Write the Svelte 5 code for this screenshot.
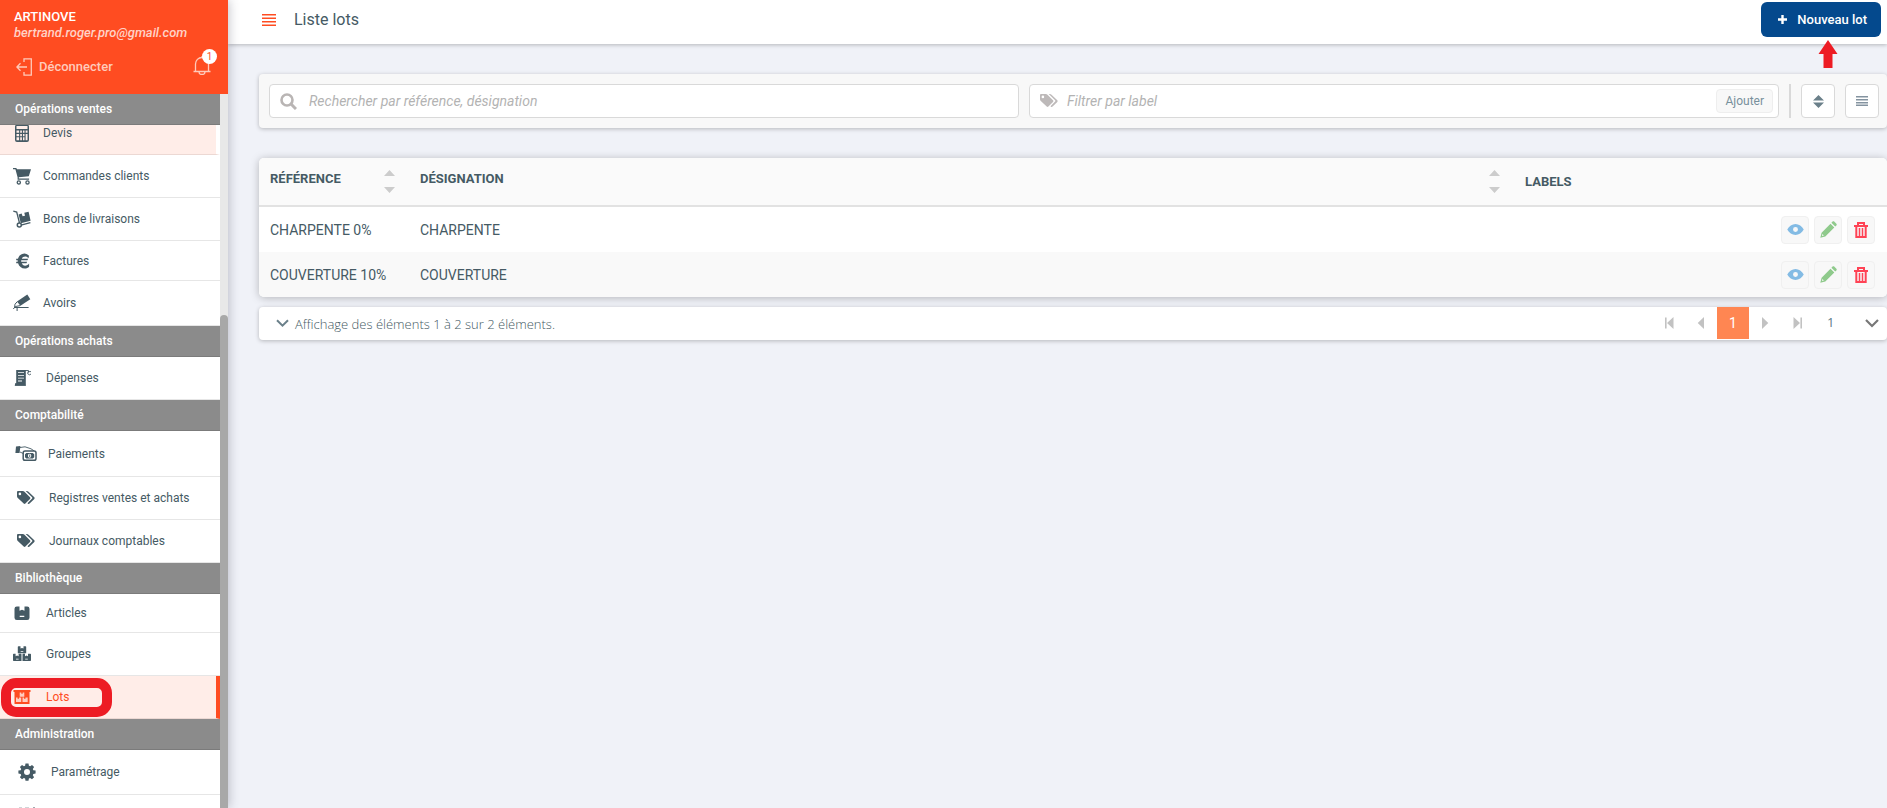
<script>
  const sections = [
    {
      title: 'Opérations ventes',
      items: [
        { label: 'Devis', icon: 'calc', kind: 'hover' },
        { label: 'Commandes clients', icon: 'cart' },
        { label: 'Bons de livraisons', icon: 'trolley' },
        { label: 'Factures', icon: 'euro', size: 'short' },
        { label: 'Avoirs', icon: 'refund', size: 'tall' }
      ]
    },
    { title: 'Opérations achats', items: [{ label: 'Dépenses', icon: 'receipt', pad: 'm' }] },
    {
      title: 'Comptabilité',
      items: [
        { label: 'Paiements', icon: 'cash', pad: 'l', size: 'tall' },
        { label: 'Registres ventes et achats', icon: 'tags', pad: 'l' },
        { label: 'Journaux comptables', icon: 'tags', pad: 'l' }
      ]
    },
    {
      title: 'Bibliothèque',
      items: [
        { label: 'Articles', icon: 'box', pad: 'm', size: 'short' },
        { label: 'Groupes', icon: 'boxes', pad: 'm' },
        { label: 'Lots', icon: 'shelf', pad: 'm', kind: 'active' }
      ]
    },
    {
      title: 'Administration',
      items: [
        { label: 'Paramétrage', icon: 'gear', pad: 'xl', size: 'tall' },
        { label: '', icon: 'users', pad: 'xl' }
      ]
    }
  ];

  const lots = [
    { reference: 'CHARPENTE 0%', designation: 'CHARPENTE' },
    { reference: 'COUVERTURE 10%', designation: 'COUVERTURE' }
  ];

  let search = $state('');
  let label = $state('');
  let page = $state('1');
</script>

{#snippet tags()}
  <svg class="icon" width="18" height="14" viewBox="0 0 18 14" fill="currentColor" aria-hidden="true">
    <path fill-rule="evenodd" d="M0 1.2C0 .5.5 0 1.2 0h4.600c.6 0 1.300.3 1.700.7l5.500 5.500c.5.500.5 1.200 0 1.700l-4.600 4.600c-.5.500-1.200.500-1.700 0L.8 6.900C.3 6.500 0 5.900 0 5.300zM2.900 1.600a1.300 1.300 0 1 0 0 2.600 1.300 1.300 0 0 0 0-2.600z" />
    <path d="M8.700 0h1.100c.6 0 1.300.3 1.700.7L17.300 6.300c.5.500.5 1.100 0 1.600l-4.700 4.700c-.5.500-1 .6-1.600.1l-.5-.5 4.600-4.600c.4-.4.4-.9 0-1.300z" />
  </svg>
{/snippet}

{#snippet menuIcon(name)}
  {#if name === 'tags'}
    {@render tags()}
  {:else}
    <svg class="icon" width="18" height="18" viewBox="0 0 18 18" fill="currentColor" aria-hidden="true">
      {#if name === 'calc'}
        <path fill-rule="evenodd" d="M4 .500h10a2 2 0 0 1 2 2V16a2 2 0 0 1-2 2H4a2 2 0 0 1-2-2V2.500a2 2 0 0 1 2-2zM3.500 2v3h11V2zM3.500 6.500v2.300h2.600V6.500zM7.200 6.500v2.300h1.700V6.500zM10 6.500v2.300h1.500V6.500zM12.600 6.500v2.300h1.900V6.500zM3.500 9.900v2.300h2.600V9.900zM7.200 9.900v2.300h1.700V9.900zM10 9.900v2.300h1.500V9.900zM12.600 9.900v6.300h1.900V9.900zM3.500 13.300v3h2.600v-3zM7.200 13.300v3h1.700v-3zM10 13.300v3h1.500v-3z" />
      {:else if name === 'cart'}
        <path d="M0 1h3.200l.9 1.300h13.900l-2.200 7-10 1v1.100h10.300v1.400H4.600V10.300L2.400 2.300H0z" />
        <circle cx="5.800" cy="15.400" r="1.600" fill="none" stroke="currentColor" stroke-width="1.300" />
        <circle cx="14.500" cy="15.400" r="1.600" fill="none" stroke="currentColor" stroke-width="1.300" />
      {:else if name === 'trolley'}
        <path d="M5.600 4.500l3-1 1 2.800 2.400-.6-.7-3 4.300-1 2 9-9.800 2.600z" />
        <path d="M.3 1.200l3.400.8 2.800 11M8 15.200l9.400-2.600" fill="none" stroke="currentColor" stroke-width="1.300" />
        <circle cx="6.300" cy="15" r="2" fill="none" stroke="currentColor" stroke-width="1.500" />
      {:else if name === 'euro'}
        <path d="M16 3.700A6.200 6.200 0 0 0 11.700 1.500C8.300 1.500 5.800 3.700 5 6.700H3.200v1.600h1.500v1.400H3.200v1.600h1.900c.9 3.200 3.400 5.300 6.700 5.300 1.800 0 3.300-.7 4.300-1.800v-3.300c-1 1.300-2.400 2.200-4 2.200-1.600 0-2.700-.9-3.300-2.400h4.700l.6-1.600H8.200V8.300h6.300l.6-1.600H8.800c.6-1.300 1.800-2.200 3.300-2.200 1.400 0 2.500.7 3.400 1.700z" />
      {:else if name === 'refund'}
        <path d="M4 7.500L14.300.6l3 4.600L7.400 11.800z" />
        <path d="M4.300 7.600L2 10.200l-.4 3.300M7.300 11.600l-4.900.9L.3 15M1.600 13.500h14M4.100 13.500V17" fill="none" stroke="currentColor" />
      {:else if name === 'receipt'}
        <path fill-rule="evenodd" d="M3.200 1h9.600v15.500H2v-2.200h1.200zM5 3.200v.8h6v-.8zM5 6v.8h6V6zM5 8.800v.8h6v-.8zM5 11.600v.8h4v-.8z" />
        <path d="M12 1.500h3.500v2M15 2.600h3.500v2.200l-2 1-1.800-1z" fill="none" stroke="currentColor" stroke-width=".9" />
        <path d="M1.800 16.300h11" stroke="currentColor" />
      {:else if name === 'box'}
        <path fill-rule="evenodd" d="M3.800 2.500H6.500v4.300l2.500-1 2.500 1V2.500h2.700a2.300 2.300 0 0 1 2.300 2.300v9a2.300 2.300 0 0 1-2.300 2.300H3.800a2.300 2.300 0 0 1-2.300-2.300v-9a2.300 2.300 0 0 1 2.300-2.300zM6.700 11.700v1.300h4.600v-1.300z" />
      {:else if name === 'boxes'}
        <path fill-rule="evenodd" d="M5.500 1.300h2v2.200l1.500-.5 1.500.5V1.300h2a.7.7 0 0 1 .7.700v6.300H4.800V2a.7.7 0 0 1 .7-.7zM7.700 6.300v.7h2.600v-.7zM.7 8.800h1.900v2.400l1.500-.6 1.500.6V8.800h2.300a.6.6 0 0 1 .6.6V16H.7a.7.7 0 0 1-.7-.7V9.500a.7.7 0 0 1 .7-.7zM3 13.800v.7h2.600v-.7zM10.100 8.800H12v2.400l1.500-.6 1.500.6V8.800h2.300a.7.7 0 0 1 .7.7v5.800a.7.7 0 0 1-.7.7H9.500V9.400a.6.6 0 0 1 .6-.6zM12.200 13.800v.7h2.600v-.7z" />
      {:else if name === 'shelf'}
        <path d="M.5 2h17v2h-1v12h-15V4h-1z" />
        <path fill="#ffede8" fill-opacity=".8" d="M6.700 4.500h1.600v1.300h1.400V4.500h1.600v4.300H6.700zM3 9.500h1.600v1.300H6V9.500h2.200v4.600H3zM9.500 9.500H11v1.300h1.500V9.500h2.200v4.600H9.500z" />
      {:else if name === 'gear'}
        <path fill-rule="evenodd" d="M7.500.5h3l.4 2.300 1.300.5L14 1.900 16.100 4l-1.300 1.900.5 1.300 2.300.4v3l-2.300.4-.5 1.300 1.300 1.900-2.100 2.100-1.900-1.300-1.200.5-.4 2.300h-3l-.4-2.300-1.300-.5L4 16.300l-2.100-2.100 1.300-1.900-.5-1.300-2.300-.4v-3l2.300-.4.5-1.300L1.900 4 4 1.900l1.900 1.400 1.200-.5zM9 6.100a3 3 0 1 0 0 6 3 3 0 0 0 0-6z" />
      {:else if name === 'users'}
        <path d="M1 .4h3v3H1zM7 .6h4v3H7zM15 0h2v4h-2z" fill-opacity=".5" />
        <path d="M1 3.400h16V16H1z" />
      {/if}
    </svg>
  {/if}
{/snippet}

{#snippet cashIcon()}
  <svg class="icon" width="22" height="18" viewBox="0 0 22 18" fill="currentColor" aria-hidden="true">
    <path d="M1 1.500L5.400 1 4.600 8H.4z" />
    <path d="M5 2.500l5-.7 6 2 3 2M5 7l3 1.400" fill="none" stroke="currentColor" stroke-width=".9" />
    <rect x="8.200" y="6" width="12.800" height="9.200" rx="1.800" fill="none" stroke="currentColor" stroke-width="1.500" />
    <path fill-rule="evenodd" d="M10 9.300l1.300-1.300h6.500l1.400 1.300v2.900l-1.400 1.300h-6.500L10 12.200zM14.600 8.700a1.700 2 0 1 0 0 4 1.700 2 0 0 0 0-4zM14.300 9.600h.9v2.400h-.9z" />
  </svg>
{/snippet}

{#snippet sorter()}
  <svg width="11" height="24" viewBox="0 0 11 24" fill="#ccc" aria-hidden="true">
    <path d="M0 6L5.500 0 11 6zM0 17h11l-5.500 6z" />
  </svg>
{/snippet}

<div class="app">
  <aside>
    <header class="account">
      <strong>ARTINOVE</strong>
      <em>bertrand.roger.pro@gmail.com</em>
      <div class="account-actions">
        <button class="logout">
          <svg width="16" height="18" viewBox="0 0 16 18" fill="none" stroke="currentColor" stroke-width="1.300" aria-hidden="true">
            <path d="M8 4V.8h7.300v16.400H8V14M11 9H1M4.500 5.300L.9 9l3.600 3.700" />
          </svg>
          Déconnecter
        </button>
        <button class="bell" aria-label="Notifications">
          <svg width="18" height="19" viewBox="0 0 18 19" fill="none" stroke="currentColor" stroke-width="1.300" aria-hidden="true">
            <path d="M.5 15.500h17M2.500 15.500V8a6.500 6.500 0 0 1 13 0v7.500M9 1.500V0M6 16a3 2.500 0 0 0 6 0" />
          </svg>
          <span class="count">1</span>
        </button>
      </div>
    </header>
    <div class="menu">
      <nav>
        {#each sections as section}
          <h2>{section.title}</h2>
          {#each section.items as item}
            <a href="#{item.icon}" class="item {item.kind ?? ''} {item.size ?? ''} {item.pad ?? 's'}">
              {#if item.icon === 'cash'}
                {@render cashIcon()}
              {:else}
                {@render menuIcon(item.icon)}
              {/if}
              <span>{item.label}</span>
              {#if item.kind === 'active'}<i class="ring"></i>{/if}
            </a>
          {/each}
        {/each}
      </nav>
      <div class="scrollbar"><div class="thumb"></div></div>
    </div>
  </aside>

  <main>
    <header class="topbar">
      <button class="burger" aria-label="Menu">
        <svg width="14" height="12" viewBox="0 0 14 12" fill="#ff4c21" aria-hidden="true">
          <path d="M0 0h14v1.500H0zM0 3.500h14V5H0zM0 7h14v1.500H0zM0 10.500h14V12H0z" />
        </svg>
      </button>
      <h1>Liste lots</h1>
      <div class="create">
        <button>
          <svg width="9" height="9" viewBox="0 0 9 9" fill="currentColor" aria-hidden="true"><path d="M3.300 0h2.400v3.300H9v2.400H5.700V9H3.300V5.700H0V3.300h3.300z" /></svg>
          Nouveau lot
        </button>
        <svg class="pointer" width="20" height="28" viewBox="0 0 20 28" fill="#ed1c24" aria-hidden="true"><path d="M10 0l9.500 14H14.500v14h-9V14H.5z" /></svg>
      </div>
    </header>

    <div class="content">
      <div class="filters">
        <label class="field">
          <svg width="17" height="17" viewBox="0 0 17 17" fill="none" stroke="#b9b5b4" aria-hidden="true">
            <circle cx="7" cy="7" r="5.500" stroke-width="2.600" />
            <path d="M11 11l5 5" stroke-width="3" />
          </svg>
          <input type="text" aria-label="Recherche" placeholder="Rechercher par référence, désignation" bind:value={search} />
        </label>
        <div class="field labels">
          {@render tags()}
          <input type="text" aria-label="Label" placeholder="Filtrer par label" bind:value={label} />
          <button class="add">Ajouter</button>
        </div>
        <span class="rule"></span>
        <div class="tools">
          <button class="square" aria-label="Trier">
            <svg width="11" height="13" viewBox="0 0 11 13" fill="#6b808a" aria-hidden="true"><path d="M0 5.500L5.500 0 11 5.500zM0 7.500h11L5.500 13z" /></svg>
          </button>
          <button class="square" aria-label="Affichage">
            <svg width="12" height="10" viewBox="0 0 12 10" fill="#8493a0" aria-hidden="true"><path d="M0 0h12v1.400H0zM0 3h12v1.400H0zM0 6h12v1.400H0zM0 8.600h12V10H0z" /></svg>
          </button>
        </div>
      </div>

      <div class="card">
        <table>
          <colgroup><col class="c-ref" /><col /><col class="c-labels" /></colgroup>
          <thead>
            <tr>
              <th><div class="head"><span>RÉFÉRENCE</span>{@render sorter()}</div></th>
              <th><div class="head"><span>DÉSIGNATION</span>{@render sorter()}</div></th>
              <th>LABELS</th>
            </tr>
          </thead>
          <tbody>
            {#each lots as lot}
              <tr>
                <td>{lot.reference}</td>
                <td>{lot.designation}</td>
                <td>
                  <div class="actions">
                    <button aria-label="Voir">
                      <svg width="17" height="11" viewBox="0 0 18 12" fill="#83bbe4" aria-hidden="true"><path fill-rule="evenodd" d="M0 6c2-3.600 5.300-6 9-6s7 2.400 9 6c-2 3.600-5.300 6-9 6S2 9.600 0 6zm9-2.700a2.700 2.700 0 1 0 0 5.400 2.700 2.700 0 0 0 0-5.400z" /></svg>
                    </button>
                    <button aria-label="Modifier">
                      <svg width="17" height="17" viewBox="0 0 17 17" fill="#8fca8c" aria-hidden="true"><path fill-rule="evenodd" d="M12.600.6c.5-.5 1.100-.5 1.600 0l2.200 2.200c.5.5.5 1.100 0 1.600L15.200 5.600 11.400 1.800zM10.500 2.700l3.800 3.800L5.300 15.400.3 16.700l1.300-5zM2.400 13.100l-.5 2 2-.5z" /></svg>
                    </button>
                    <button aria-label="Supprimer">
                      <svg width="14" height="16" viewBox="0 0 14 16" fill="none" stroke="#ff4355" stroke-width="2" aria-hidden="true"><path d="M0 4h14M4 3.600V1h6v2.600M2.300 4v11h9.400V4" /><path d="M5.500 6V15M8.500 6V15" stroke-width="1.500" /></svg>
                    </button>
                  </div>
                </td>
              </tr>
            {/each}
          </tbody>
        </table>
      </div>

      <div class="pager">
        <svg width="13" height="9" viewBox="0 0 13 9" fill="none" stroke="#6b808a" stroke-width="2" aria-hidden="true"><path d="M1 1.200l5.500 5.500L12 1.200" /></svg>
        <p>Affichage des éléments 1 à 2 sur 2 éléments.</p>
        <div class="pages">
          <button aria-label="Première page"><svg width="9" height="12" viewBox="0 0 9 12" fill="#c2c2c2"><path d="M0 .5h1.600v11H0zM8.500 0v12L2 6z" /></svg></button>
          <button aria-label="Page précédente"><svg width="8" height="12" viewBox="0 0 8 12" fill="#c2c2c2"><path d="M7 0v12L.7 6z" /></svg></button>
          <button class="current">1</button>
          <button aria-label="Page suivante"><svg width="8" height="12" viewBox="0 0 8 12" fill="#c2c2c2"><path d="M1 0v12L7.300 6z" /></svg></button>
          <button aria-label="Dernière page"><svg width="9" height="12" viewBox="0 0 9 12" fill="#c2c2c2"><path d="M7.400.5H9v11H7.400zM.5 0v12L7 6z" /></svg></button>
        </div>
        <div class="jump">
          <select aria-label="Page" bind:value={page}><option>1</option></select>
          <svg width="14" height="9" viewBox="0 0 14 9" fill="none" stroke="#777" stroke-width="2.200" aria-hidden="true"><path d="M1 1l6 6 6-6" /></svg>
        </div>
      </div>
    </div>
  </main>
</div>

<style>
  :global(body) { margin: 0; background: #f0f2f8; }
  .app {
    display: flex;
    height: 100vh;
    overflow: hidden;
    font-family: Roboto, sans-serif;
    font-size: 14px;
    color: #455a64;
  }
  button {
    font: inherit;
    color: inherit;
    background: none;
    border: 0;
    padding: 0;
    display: flex;
    align-items: center;
    justify-content: center;
  }
  svg { display: block; flex: none; }

  aside {
    width: 228px;
    flex: none;
    display: flex;
    flex-direction: column;
    position: relative;
    z-index: 2;
    background: #fff;
    box-shadow: 1px 0 10px rgba(60, 60, 80, 0.3);
  }
  .account {
    box-sizing: border-box;
    height: 94px;
    flex: none;
    background: #ff4c21;
    color: #fff;
    padding: 9px 10px 0 14px;
    font-size: 13px;
    line-height: 16px;
    display: flex;
    flex-direction: column;
  }
  .account strong { font-weight: 500; }
  .account em { color: #ffd2c7; font-weight: 500; }
  .account-actions {
    display: flex;
    justify-content: space-between;
    align-items: center;
    margin-top: 16px;
    height: 20px;
    color: #ffcabb;
  }
  .logout { gap: 7px; padding-left: 2px; font-weight: 500; }
  .bell { position: relative; margin: 0 7px 3px 0; }
  .count {
    position: absolute;
    left: 9px;
    top: -7px;
    width: 15px;
    height: 15px;
    border-radius: 50%;
    background: #fff;
    color: #ff4c21;
    font-size: 10px;
    line-height: 15px;
    text-align: center;
  }
  .menu { flex: 1; min-height: 0; display: flex; overflow: hidden; }
  nav { flex: 1; overflow: hidden; }
  .scrollbar { width: 8px; background: #e8e8e8; padding-top: 221px; box-sizing: border-box; }
  .thumb { height: 100%; background: #a8a8a8; border-radius: 4px 4px 0 0; }
  h2 {
    position: relative;
    z-index: 1;
    margin: 0;
    box-sizing: border-box;
    height: 31px;
    padding-left: 15px;
    background: #8b8b8b;
    border-bottom: 1px solid #7b7b7b;
    color: #fff;
    font-size: 12px;
    font-weight: 500;
    line-height: 30px;
  }
  .item {
    position: relative;
    box-sizing: border-box;
    height: 43px;
    display: flex;
    align-items: center;
    padding-left: 13px;
    gap: 12px;
    border-bottom: 1px solid #e6e6e6;
    background: #fff;
    color: #455a64;
    font-size: 12px;
    text-decoration: none;
  }
  .short { height: 40px; }
  .tall { height: 45px; }
  .m { gap: 15px; }
  .m.short { height: 39px; }
  .l { padding-left: 17px; gap: 14px; }
  .l.tall { height: 46px; padding-left: 15px; gap: 11px; }
  .xl { padding-left: 18px; gap: 15px; }
  .hover, .active { background: #ffede8; border-bottom-color: #ecd8d3; }
  .hover { margin-top: -13px; border-right: 4px solid #fff; }
  .active { color: #ff4c21; border-right: 4px solid #ff4c21; }
  .ring {
    position: absolute;
    box-sizing: border-box;
    left: 1px;
    top: 2px;
    width: 111px;
    height: 39px;
    border: 10px solid #ed1c24;
    border-radius: 15px;
  }

  main { flex: 1; min-width: 0; }
  .topbar {
    height: 44px;
    display: flex;
    align-items: center;
    background: #fff;
    padding: 0 6px 0 34px;
    box-shadow: 0 1px 4px rgba(0, 0, 0, 0.25);
  }
  .topbar h1 { margin: 0 0 5px 18px; font-size: 16px; font-weight: 400; line-height: 20px; flex: 1; }
  .burger { margin-bottom: 5px; }
  .create { position: relative; margin-bottom: 5px; }
  .create button {
    height: 35px;
    padding: 0 14px 0 17px;
    gap: 10px;
    border-radius: 6px;
    background: #04498d;
    color: #fff;
    font-size: 13px;
    font-weight: 500;
  }
  .pointer { position: absolute; left: 57px; top: 38px; }

  .content { padding: 30px 0 0 31px; }
  .filters {
    display: flex;
    align-items: center;
    gap: 10px;
    padding: 10px 8px 10px 10px;
    border-radius: 4px;
    background: #f8f8f8;
    box-shadow: 0 1px 4px rgba(0, 0, 0, 0.25);
  }
  .field {
    flex: 1;
    min-width: 0;
    box-sizing: border-box;
    height: 34px;
    display: flex;
    align-items: center;
    gap: 12px;
    padding: 0 5px 0 10px;
    background: #fff;
    border: 1px solid #d9d9d9;
    border-radius: 4px;
    color: #bdb9b9;
  }
  .labels { gap: 9px; }
  .field input {
    flex: 1;
    min-width: 0;
    border: 0;
    padding: 0;
    outline: 0;
    background: none;
    font: 14px Roboto, sans-serif;
    color: #455a64;
  }
  .field input::placeholder { font-style: italic; color: #b3b3b3; }
  .add {
    height: 24px;
    padding: 0 8px;
    border: 1px solid #eee;
    border-radius: 4px;
    background: #f8f8f8;
    color: #78909c;
    font-size: 12px;
  }
  .rule { width: 2px; height: 34px; background: #d9d9d9; }
  .tools { display: flex; gap: 10px; }
  .square {
    box-sizing: border-box;
    width: 34px;
    height: 34px;
    border: 1px solid #d9d9d9;
    border-radius: 4px;
    background: #fff;
  }

  .card {
    margin-top: 30px;
    border-radius: 5px;
    overflow: hidden;
    background: #fff;
    box-shadow: 0 1px 9px rgba(0, 0, 0, 0.25);
  }
  table { width: 100%; table-layout: fixed; border-collapse: separate; border-spacing: 0; }
  .c-ref { width: 150px; }
  .c-labels { width: 373px; }
  th {
    height: 47px;
    padding: 0 14px 0 11px;
    background: #fafafa;
    border-bottom: 2px solid #e2e2e2;
    text-align: left;
    font-size: 13px;
    font-weight: 700;
  }
  .head { display: flex; justify-content: space-between; align-items: center; }
  .head span { padding-bottom: 6px; }
  td { height: 45px; padding: 0 11px; font-size: 14px; }
  tbody tr:nth-child(even) { background: #f9f9f9; }
  .actions { display: flex; justify-content: flex-end; gap: 5px; padding-right: 1px; }
  .actions button {
    box-sizing: border-box;
    width: 28px;
    height: 28px;
    border: 1px solid #f0f0f0;
    border-radius: 4px;
    background: #f8f8f8;
  }

  .pager {
    display: flex;
    align-items: center;
    height: 33px;
    margin-top: 10px;
    padding-left: 17px;
    border-radius: 4px;
    background: #fff;
    box-shadow: 0 1px 4px rgba(0, 0, 0, 0.25);
  }
  .pager p {
    flex: 1;
    margin: 0 0 0 6px;
    font-family: "Open Sans", sans-serif;
    font-size: 13px;
    font-weight: 300;
  }
  .pages { display: flex; align-self: flex-start; }
  .pages button { width: 32px; height: 32px; }
  .pages .current { background: #ff8652; color: #fff; }
  .jump { position: relative; width: 74px; display: flex; align-items: center; }
  .jump select {
    appearance: none;
    width: 100%;
    height: 32px;
    border: 0;
    padding: 0 0 4px 14px;
    background: none;
    color: #607d8b;
    font: 13px "Open Sans", sans-serif;
  }
  .jump svg { position: absolute; right: 8px; pointer-events: none; }
</style>
